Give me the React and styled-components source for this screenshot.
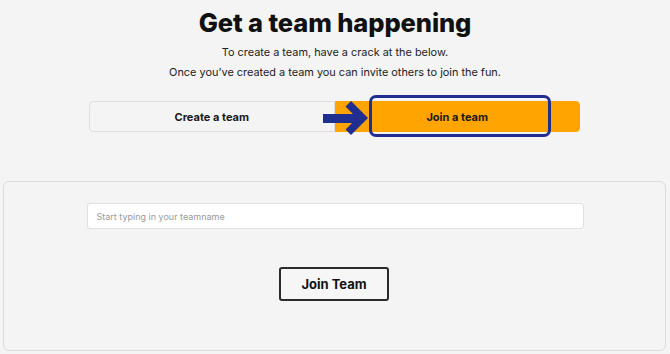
import React from 'react';
import styled, { createGlobalStyle } from 'styled-components';

const GlobalStyle = createGlobalStyle`
  html, body {
    margin: 0;
    padding: 0;
    background: #f4f4f4;
    font-family: "Inter", "Liberation Sans", sans-serif;
  }
`;

const Page = styled.div`
  width: 670px;
  height: 354px;
  overflow: hidden;
  display: flex;
  flex-direction: column;
  align-items: center;
`;

const Title = styled.h1`
  margin: 6px 0 0;
  font-size: 25.5px;
  line-height: 34px;
  font-weight: 800;
  color: #111;
  letter-spacing: -0.1px;
`;

const Intro = styled.p`
  margin: 2px 0 0;
  font-size: 10.9px;
  line-height: 20px;
  color: #222;
  text-align: center;
`;

const Tabs = styled.div`
  position: relative;
  margin: 19px 0 0 -1px;
  width: 491px;
  height: 31px;
  display: flex;
`;

const Tab = styled.div`
  flex: 1;
  display: flex;
  align-items: center;
  justify-content: center;
  font-size: 11px;
  font-weight: 700;
  color: #1a1a1a;
  box-sizing: border-box;
  background: ${({ $active }) => ($active ? '#ffa400' : '#f4f4f4')};
  border: 1px solid ${({ $active }) => ($active ? '#ffa400' : '#dedede')};
  border-radius: ${({ $active }) => ($active ? '0 4px 4px 0' : '4px 0 0 4px')};
`;

const Highlight = styled.div`
  position: absolute;
  left: 280px;
  top: -6px;
  width: 182px;
  height: 42px;
  box-sizing: border-box;
  border: 3px solid #202f8f;
  border-radius: 7px;
  pointer-events: none;
`;

const Arrow = styled.svg`
  position: absolute;
  left: 234px;
  top: -1px;
  pointer-events: none;
`;

const Panel = styled.div`
  margin: 49px 0 0 -1px;
  width: 663px;
  height: 170px;
  box-sizing: border-box;
  border: 1px solid #dcdcdc;
  border-radius: 6px;
  background: #f4f4f4;
  display: flex;
  flex-direction: column;
  align-items: center;
`;

const TeamInput = styled.input`
  margin: 21px 0 0 1px;
  width: 497px;
  height: 26px;
  box-sizing: border-box;
  border: 1px solid #e0e0e0;
  border-radius: 3px;
  background: #fff;
  padding: 0 9px;
  font-family: "Inter", "Liberation Sans", sans-serif;
  font-size: 9px;
  outline: none;
  &::placeholder {
    color: #9a9a9a;
  }
`;

const JoinButton = styled.button`
  margin: 38px 0 0 -1px;
  width: 110px;
  height: 34px;
  box-sizing: border-box;
  border: 2px solid #2a2a2a;
  border-radius: 3px;
  background: #f6f6f6;
  font-family: "Inter", "Liberation Sans", sans-serif;
  font-size: 13px;
  font-weight: 700;
  color: #111;
`;

export default function App() {
  return (
    <Page>
      <GlobalStyle />
      <Title>Get a team happening</Title>
      <Intro>
        To create a team, have a crack at the below.
        <br />
        Once you’ve created a team you can invite others to join the fun.
      </Intro>
      <Tabs>
        <Tab>Create a team</Tab>
        <Tab $active>Join a team</Tab>
        <Arrow width="48" height="36" viewBox="0 0 48 36">
          <rect x="0" y="14" width="38" height="9" fill="#202f8f" />
          <polygon
            points="28,1 45,18 28,35 22.5,29.5 34,18 22.5,6.5"
            fill="#202f8f"
          />
        </Arrow>
        <Highlight />
      </Tabs>
      <Panel>
        <TeamInput placeholder="Start typing in your teamname" />
        <JoinButton>Join Team</JoinButton>
      </Panel>
    </Page>
  );
}
